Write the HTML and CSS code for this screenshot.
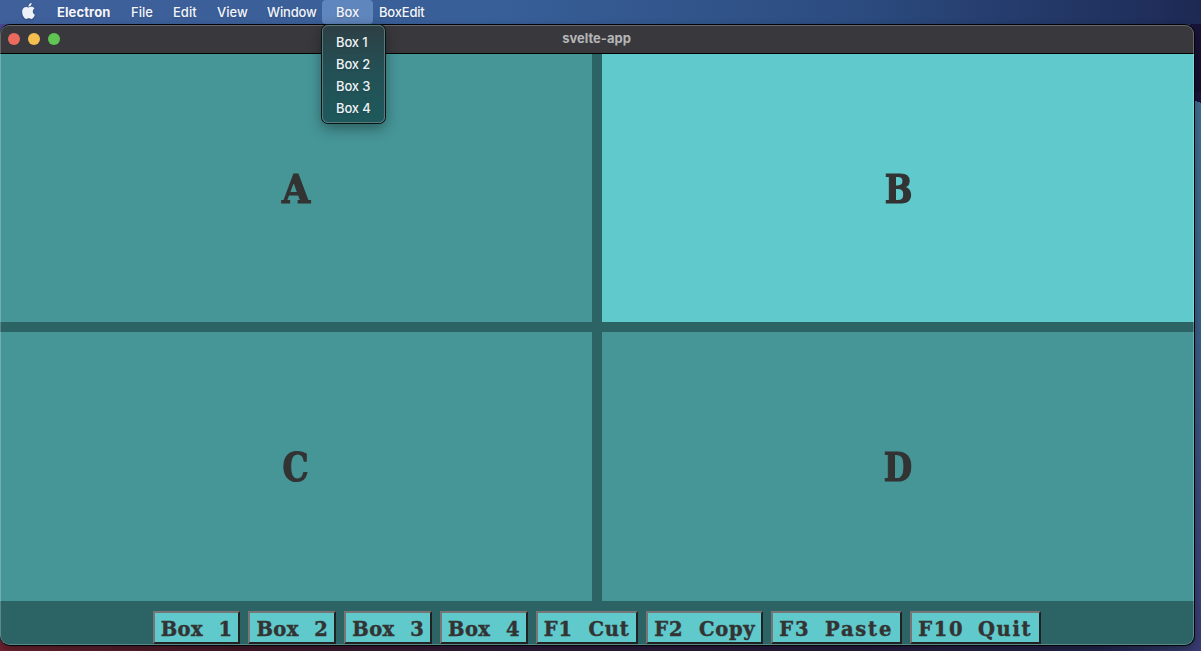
FILE: index.html
```html
<!DOCTYPE html>
<html lang="en">
<head>
<meta charset="utf-8">
<title>svelte-app</title>
<link rel="stylesheet" href="styles.css">
</head>
<body>
<div class="desktop">
  <nav class="menubar">
    <svg class="apple" viewBox="2 0 20 24" preserveAspectRatio="none"><path d="M12.152 6.896c-.948 0-2.415-1.078-3.96-1.04-2.04.027-3.91 1.183-4.961 3.014-2.117 3.675-.546 9.103 1.519 12.09 1.013 1.454 2.208 3.09 3.792 3.039 1.52-.065 2.09-.987 3.935-.987 1.831 0 2.35.987 3.96.948 1.637-.026 2.676-1.48 3.676-2.948 1.156-1.688 1.636-3.325 1.662-3.415-.039-.013-3.182-1.221-3.22-4.857-.026-3.04 2.48-4.494 2.597-4.559-1.429-2.09-3.623-2.324-4.39-2.376-2-.156-3.675 1.09-4.61 1.09zM15.53 3.83c.843-1.012 1.4-2.427 1.245-3.83-1.207.052-2.662.805-3.532 1.818-.78.896-1.454 2.338-1.273 3.714 1.338.104 2.715-.688 3.559-1.701"/></svg>
    <span class="item app">Electron</span>
    <span class="item file">File</span>
    <span class="item edit">Edit</span>
    <span class="item view">View</span>
    <span class="item win">Window</span>
    <span class="item box open">Box
      <span class="dropdown">
        <span class="option">Box 1</span>
        <span class="option">Box 2</span>
        <span class="option">Box 3</span>
        <span class="option">Box 4</span>
      </span>
    </span>
    <span class="item boxedit">BoxEdit</span>
  </nav>
  <main class="window">
    <header class="titlebar">
      <div class="lights"><i class="light red"></i><i class="light yellow"></i><i class="light green"></i></div>
      <span class="title">svelte-app</span>
    </header>
    <section class="grid">
      <div class="cell"><span class="letter wide">A</span></div>
      <div class="cell active"><span class="letter">B</span></div>
      <div class="cell"><span class="letter">C</span></div>
      <div class="cell"><span class="letter">D</span></div>
    </section>
    <footer class="keys">
      <button class="key w5">Box 1</button>
      <button class="key w5">Box 2</button>
      <button class="key w5">Box 3</button>
      <button class="key w5">Box 4</button>
      <button class="key w6">F1 Cut</button>
      <button class="key w7">F2 Copy</button>
      <button class="key w8 paste">F3 Paste</button>
      <button class="key w8 quit">F10 Quit</button>
    </footer>
  </main>
</div>
</body>
</html>
```
FILE: styles.css
```css
* { box-sizing: border-box; }
body { margin: 0; overflow: hidden; font-family: Inter, sans-serif; }
.desktop {
  width: 1201px;
  height: 651px;
  background:
    linear-gradient(#4a4690, #4a4690) 0 0 / 20px 40px no-repeat,
    linear-gradient(20deg, transparent 50%, #19143c 50%) 1190px 92px / 11px 18px no-repeat,
    linear-gradient(#19143c, #150f30) 1190px 0 / 11px 93px no-repeat,
    linear-gradient(to bottom, #416f91, #3a648b 200px, #3b4b7b 400px, #393b72) 1190px 92px / 11px 559px no-repeat,
    linear-gradient(to right, #702332 0, #48192a 230px, #311c3c 500px, #271c3f 850px, #242650 1100px, #384275 1201px);
}
.menubar {
  height: 24px;
  display: flex;
  align-items: center;
  padding-left: 22px;
  background: linear-gradient(to right, #3f609b, #385f98 500px, #2c4c80 850px, #20315e 1130px, #1e2853);
  color: #f3f5fa;
  font-size: 13px;
  font-weight: 500;
  line-height: 24px;
}
.apple { width: 13px; height: 16px; margin: 0 22px 2px 0; fill: #eef1f7; filter: drop-shadow(0 1px 1px #20304f66); }
.item { white-space: nowrap; text-shadow: 0 1px 2px #20304f55; }
.app { width: 74px; font-weight: 700; letter-spacing: .1px; }
.file { width: 42px; }
.edit { width: 44px; }
.view { width: 50px; }
.win { width: 55px; letter-spacing: -.15px; }
.box { position: relative; width: 51px; height: 24px; padding-left: 14px; }
.open { background: #6087bd; border-radius: 4px; }
.boxedit { padding-left: 6px; letter-spacing: -.2px; }
.dropdown {
  position: absolute;
  z-index: 2;
  top: 25px;
  left: 0;
  width: 63px;
  height: 98px;
  padding: 5px 0 0 13px;
  border: 1px solid #57797c;
  border-radius: 6px;
  background: linear-gradient(#2d3f44, #235055 45%, #1e595b);
  box-shadow: 0 0 0 1px #081516, 0 5px 14px #0006;
  display: flex;
  flex-direction: column;
}
.option { height: 22px; line-height: 22px; color: #edf3f3; font-size: 13px; letter-spacing: -.15px; }
.window {
  position: relative;
  width: 1195px;
  height: 622px;
  border: 1px solid #020507;
  border-left: 0;
  border-radius: 10px;
  overflow: hidden;
  display: flex;
  flex-direction: column;
  background: #2c6465;
  box-shadow: 0 4px 10px #0005;
}
.window::after {
  content: "";
  position: absolute;
  inset: 0;
  border: 1px solid #ffffff3c;
  border-radius: 9px;
  pointer-events: none;
}
.titlebar {
  height: 29px;
  flex: none;
  display: grid;
  grid-template-columns: 1fr auto 1fr;
  align-items: center;
  border-bottom: 1px solid #000;
  background: #39393d;
}
.lights { display: flex; gap: 8px; padding-left: 8px; }
.light { width: 12px; height: 12px; border-radius: 50%; }
.red { background: #ec6a5e; }
.yellow { background: #f4bf4f; }
.green { background: #61c554; }
.title { color: #b5b5b8; font-size: 13px; font-weight: 700; padding: 0 1px 2px 0; }
.grid {
  height: 547px;
  flex: none;
  display: grid;
  grid-template: 268px 269px / 592px 592px;
  gap: 10px;
}
.cell {
  display: flex;
  align-items: center;
  justify-content: center;
  background: #469597;
  color: #333;
  font: bold 39px "DejaVu Serif", serif;
}
.letter { transform: scaleX(.84); -webkit-text-stroke: 1.2px #333; padding-top: 1px; }
.wide { transform: scaleX(.93); }
.active { background: #5fc9cb; }
.keys { display: flex; justify-content: center; gap: 8px; padding-top: 10px; }
.key {
  height: 33px;
  padding: 4px 0 0 6px;
  border: 2px solid;
  border-color: #767676 #212121 #212121 #767676;
  background: #5fc9cb;
  color: #333;
  font: bold 19.5px/25px "DejaVu Serif", serif;
  -webkit-text-stroke: .4px #333;
  letter-spacing: .4px;
  word-spacing: 8.4px;
  text-align: left;
  white-space: nowrap;
}
.w5 { width: 87.8px; }
.w6 { width: 102.5px; letter-spacing: .7px; }
.w7 { width: 117px; letter-spacing: .7px; }
.w8 { width: 131px; }
.paste { letter-spacing: 1.8px; word-spacing: 6px; }
.quit { letter-spacing: 1.6px; word-spacing: 5.5px; }
```
